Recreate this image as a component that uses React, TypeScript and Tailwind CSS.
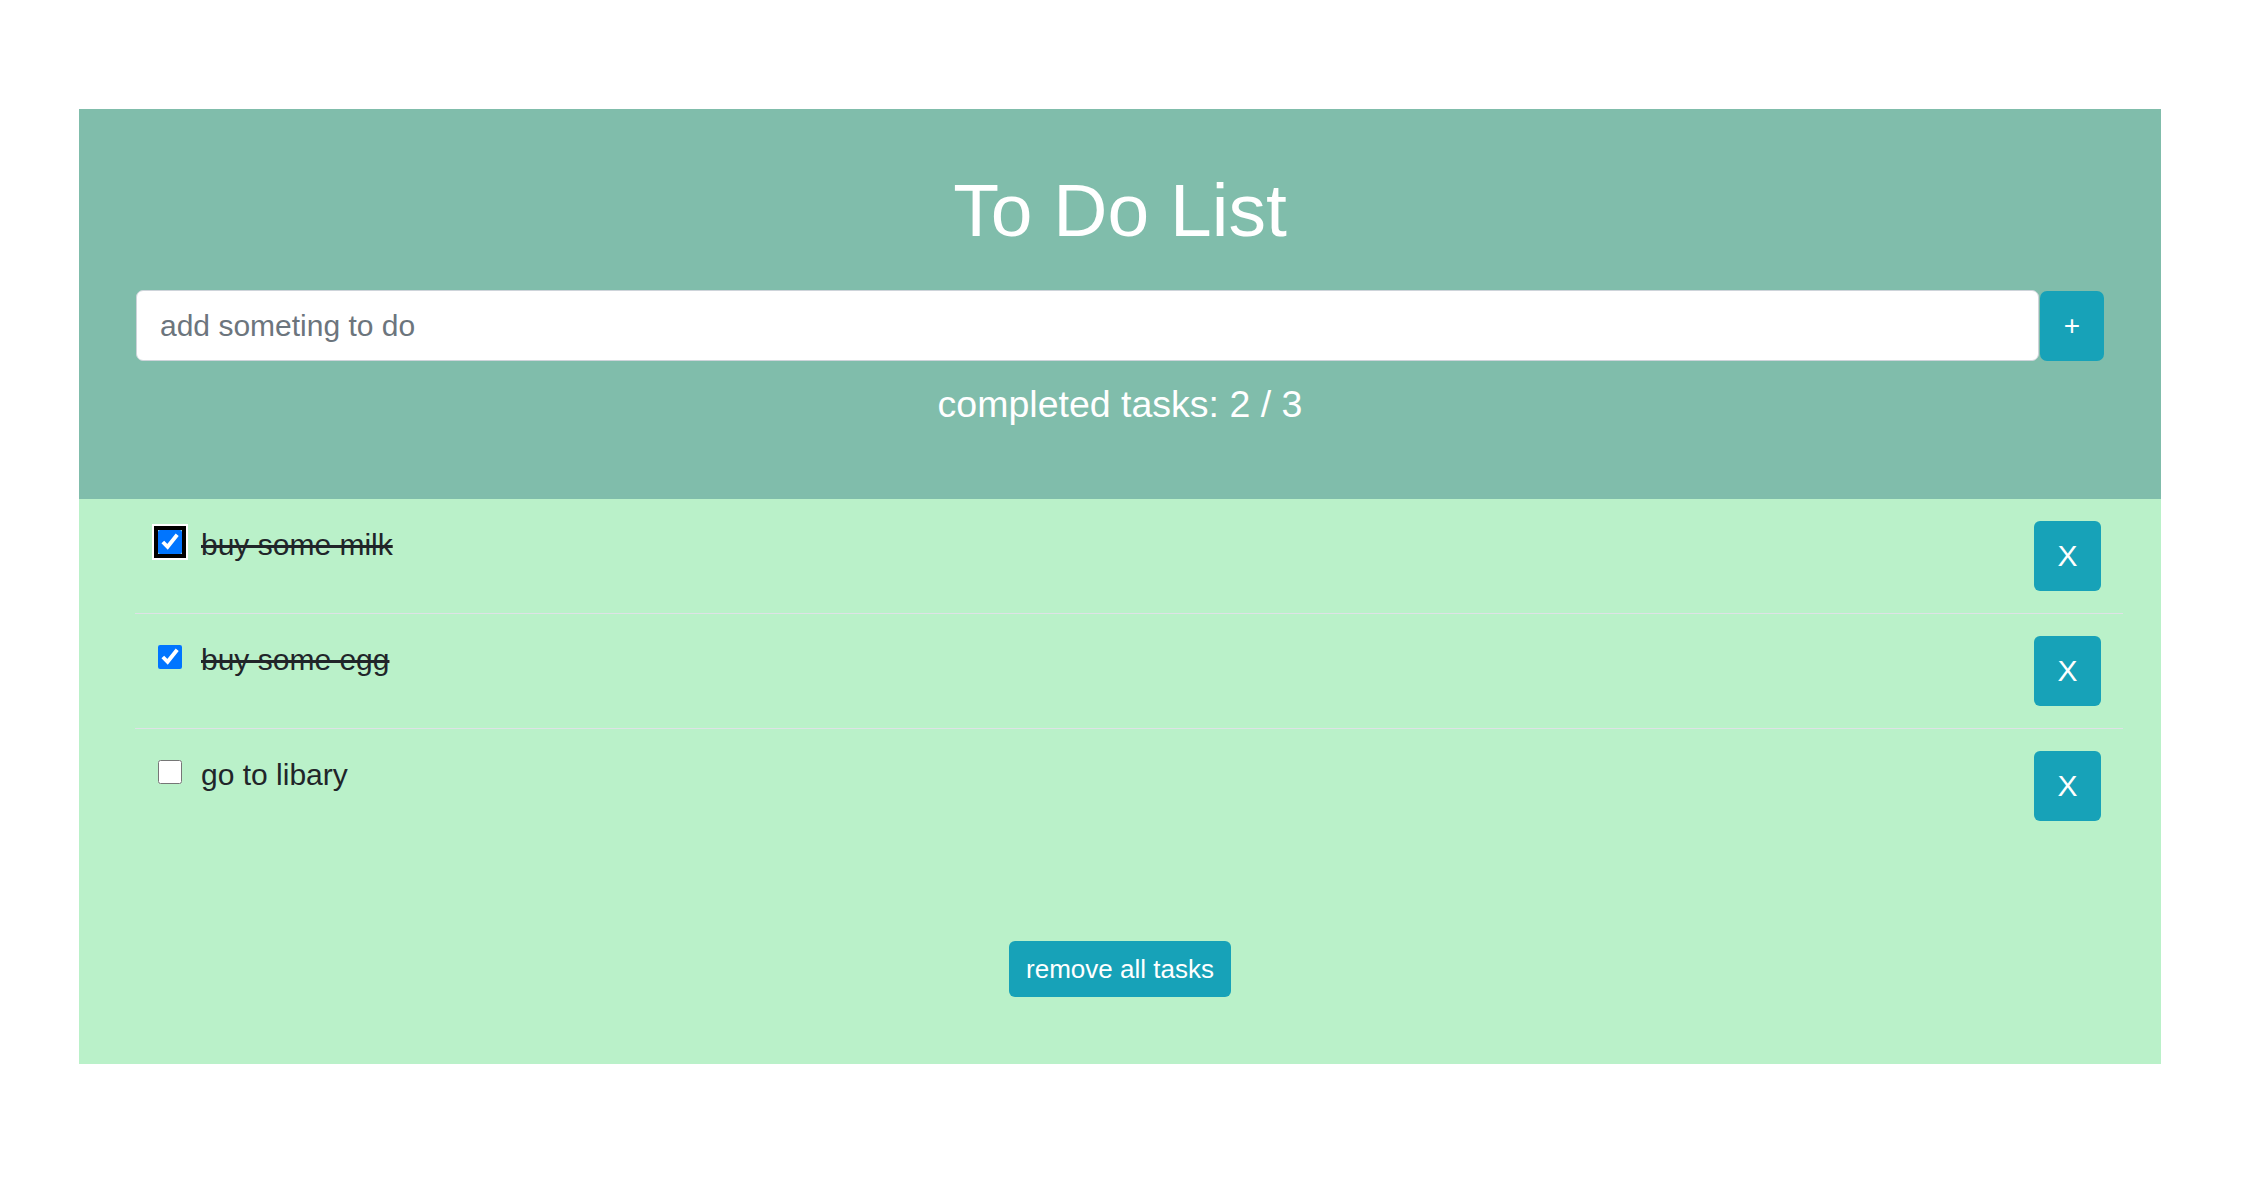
import React from "react";

const tasks = [
  { text: "buy some milk", done: true, focus: true },
  { text: "buy some egg", done: true, focus: false },
  { text: "go to libary", done: false, focus: false },
];

export default function App() {
  return (
    <div className="min-h-screen bg-white pt-[109px] px-[79px] font-['Liberation_Sans',Arial,sans-serif]">
      <div className="w-[2082px]">
        <header className="bg-[#80bdab] pt-[56px] pb-[68px] px-[57px]">
          <h1 className="text-center text-white text-[75px] leading-[90px] font-normal">To Do List</h1>
          <div className="mt-[35px] flex h-[71px]">
            <input
              type="text"
              placeholder="add someting to do"
              className="flex-1 min-w-0 h-full rounded-[7px] border-[1.5px] border-[#ced4da] bg-white pl-[23px] text-[30px] text-[#495057] placeholder:text-[#6c757d] outline-none"
            />
            <button className="ml-[1px] mt-[1px] w-[64px] h-[70px] rounded-[7px] bg-[#17a2b8] text-white text-[28px] leading-none">
              +
            </button>
          </div>
          <p className="mt-[16px] text-center text-white text-[37.5px] leading-[54px]">completed tasks: 2 / 3</p>
        </header>
        <section className="bg-[#baf1c9] pb-[67px]">
          <ul className="ml-[56px] mr-[38px]">
            {tasks.map((t) => (
              <li
                key={t.text}
                className="flex items-start justify-between border-b border-[#dee2e6] last:border-b-0 py-[22px] pl-[23px] pr-[22px]"
              >
                <div className="flex items-start">
                  <input
                    type="checkbox"
                    defaultChecked={t.done}
                    className={
                      t.focus
                        ? "mt-[9px] w-6 h-6 rounded-[3px] outline-4 outline-black shadow-[0_0_0_6px_white]"
                        : "mt-[9px] w-6 h-6"
                    }
                  />
                  <span
                    className={
                      t.done
                        ? "ml-[19px] mt-[1px] text-[30px] leading-[45px] text-[#212529] line-through"
                        : "ml-[19px] mt-[1px] text-[30px] leading-[45px] text-[#212529]"
                    }
                  >
                    {t.text}
                  </span>
                </div>
                <button className="w-[67px] h-[70px] rounded-[6px] bg-[#17a2b8] text-white text-[30px] leading-none">
                  X
                </button>
              </li>
            ))}
          </ul>
          <div className="mt-[98px] flex justify-center">
            <button className="w-[222px] h-[56px] rounded-[6px] bg-[#17a2b8] text-white text-[26px] leading-none">
              remove all tasks
            </button>
          </div>
        </section>
      </div>
    </div>
  );
}
